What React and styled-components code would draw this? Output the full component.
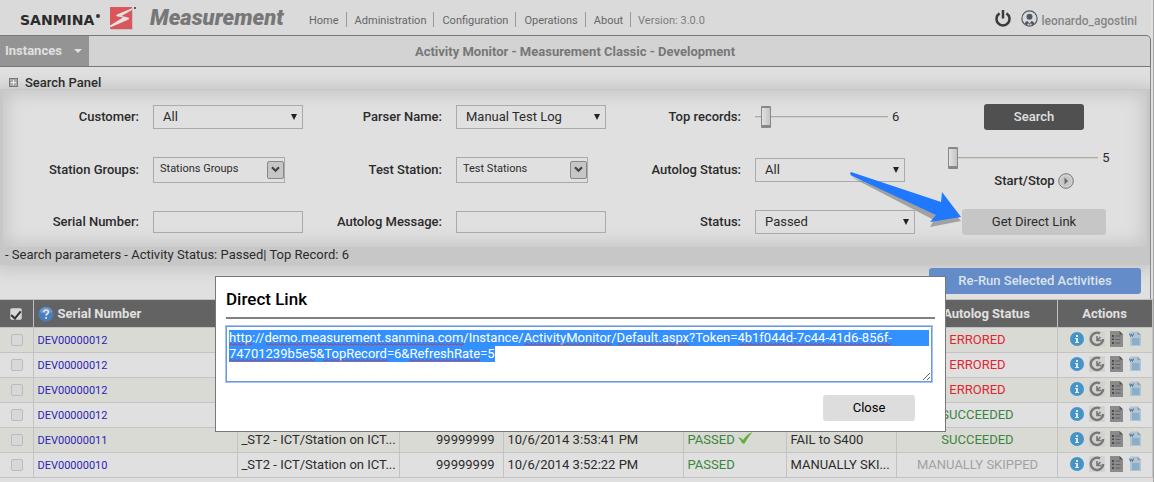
import React, { useEffect, useRef } from "react";
import styled, { createGlobalStyle } from "styled-components";

const TOKEN_URL =
  "http://demo.measurement.sanmina.com/Instance/ActivityMonitor/Default.aspx?Token=4b1f044d-7c44-41d6-856f-74701239b5e5&TopRecord=6&RefreshRate=5";

const MENU = ["Home", "Administration", "Configuration", "Operations", "About"];

const ROWS = [
  { serial: "DEV00000012", autolog: "ERRORED" },
  { serial: "DEV00000012", autolog: "ERRORED" },
  { serial: "DEV00000012", autolog: "ERRORED" },
  { serial: "DEV00000012", autolog: "SUCCEEDED" },
  {
    serial: "DEV00000011",
    station: "_ST2 - ICT/Station on ICT...",
    part: "99999999",
    date: "10/6/2014 3:53:41 PM",
    status: "PASSED",
    checked: true,
    message: "FAIL to S400",
    autolog: "SUCCEEDED",
  },
  {
    serial: "DEV00000010",
    station: "_ST2 - ICT/Station on ICT...",
    part: "99999999",
    date: "10/6/2014 3:52:22 PM",
    status: "PASSED",
    message: "MANUALLY SKI...",
    autolog: "MANUALLY SKIPPED",
  },
];

const AUTOLOG_COLORS = {
  ERRORED: "#df2732",
  SUCCEEDED: "#3a8540",
  "MANUALLY SKIPPED": "#a2a2a2",
};

// start and width of every misspelled word, per line of the link
const MISSPELLED = [
  { line: 0, x: 0, w: 23 },
  { line: 0, x: 37, w: 198 },
  { line: 0, x: 295, w: 88 },
  { line: 0, x: 389, w: 71 },
  { line: 0, x: 510, w: 152 },
  { line: 1, x: 0, w: 86 },
  { line: 1, x: 94, w: 65 },
  { line: 1, x: 180, w: 71 },
];

const SanminaMark = () => (
  <svg width="28" height="26" viewBox="0 0 28 26" aria-hidden="true">
    <rect x="1" y="2" width="22" height="22" fill="#c4c2c2" />
    <rect x="0" y="1" width="22" height="22" fill="#d9565b" />
    <path d="M22 2.200L7 8.500Q5 10 8 10.500L13 11.500 0 19.500V21.500L17.500 14Q21 12.300 17 11.300L11.500 10 22 4z" fill="#e4e1e1" />
    <circle cx="25" cy="2" r="1" fill="#333" />
  </svg>
);

const PowerIcon = () => (
  <svg width="16" height="17" viewBox="0 0 16 17" fill="none" stroke="#3a3a3a" strokeWidth="2.500" aria-hidden="true">
    <path d="M4.600 3.400a6.500 6.500 0 1 0 6.800 0" />
    <path d="M8 0v8.500" />
  </svg>
);

const UserIcon = () => (
  <svg width="17" height="17" viewBox="0 0 17 17" aria-hidden="true">
    <circle cx="8.500" cy="8.500" r="7.600" fill="none" stroke="#505866" strokeWidth="1.200" />
    <circle cx="8.500" cy="6.800" r="3" fill="#505866" />
    <path d="M3.500 13.500q1-2.500 3-2.500l2 2.500 2-2.500q2 0 3 2.500l-2.500 2-1-2.500-1.500 2-1.500-2-1 2.500z" fill="#505866" />
  </svg>
);

const HelpIcon = () => (
  <svg width="16" height="16" viewBox="0 0 16 16" aria-hidden="true">
    <circle cx="8" cy="8" r="7.500" fill="#4a7dbd" />
    <path d="M1.500 6a6.800 6.800 0 0 1 13 0q-6 3-13 0z" fill="#6b97cc" />
    <path d="M5.700 6.300q.1-2.300 2.400-2.300 2.300 0 2.300 2 0 1.200-1.300 2-1 .6-1 1.700" fill="none" stroke="#e3e6ea" strokeWidth="1.600" />
    <rect x="7.200" y="11" width="1.800" height="1.700" fill="#e3e6ea" />
  </svg>
);

const InfoIcon = () => (
  <svg width="14" height="14" viewBox="0 0 14 14" aria-hidden="true">
    <circle cx="7" cy="7" r="7" fill="#4594c9" />
    <path d="M6 3h2v2H6zM5 6h3v4h1v1H5v-1h1V7H5z" fill="#e2e8ec" />
  </svg>
);

const RerunIcon = () => (
  <svg width="16" height="16" viewBox="0 0 16 16" aria-hidden="true">
    <rect width="16" height="16" fill="#d2d2d0" />
    <path d="M11 2.400A6.200 6.200 0 1 0 14.200 8" fill="none" stroke="#777" strokeWidth="2.400" />
    <path d="M8 5v4.500h4.500M8 9.500L11.500 6" fill="none" stroke="#777" strokeWidth="1.600" />
  </svg>
);

const LogIcon = () => (
  <svg width="14" height="16" viewBox="0 0 14 16" aria-hidden="true">
    <path d="M0 0h9.500L13 3.500V16H0z" fill="#8b8b8b" />
    <path d="M9.500 0v3.500H13z" fill="#555" />
    <path d="M2 4h2v2H2zM2 7.500h2v1.500H2zM2 11h2v2H2z" fill="#4b4b4b" />
    <path d="M5.500 5h5M5.500 8.500h5M5.500 12h5" stroke="#636363" />
  </svg>
);

const WordIcon = () => (
  <svg width="13" height="16" viewBox="0 0 13 16" aria-hidden="true">
    <path d="M1 .5h7.500l3.500 3.500v11H1z" fill="#b4c3cd" />
    <path d="M8.500 .5v3.500H12z" fill="#8aa2b2" />
    <path d="M3 7h7.500v7H3z" fill="#87aecb" />
    <path d="M.5 2.500l1 3 1-2.500 1 2.500 1-3" fill="none" stroke="#3c79a8" />
  </svg>
);

const CheckMark = () => (
  <svg width="15" height="12" viewBox="0 0 15 12" aria-hidden="true">
    <path d="M0 5.500q2-.5 3.500 1L5 8Q9 2 14.500 0 10 5 6.500 11.500q-1.500.5-2.500-.5Q2.500 7.500 0 5.500z" fill="#62b03c" />
  </svg>
);

const PlayIcon = () => (
  <svg width="16" height="16" viewBox="0 0 16 16" aria-hidden="true">
    <circle cx="8" cy="8" r="7.300" fill="#d2d2d2" stroke="#777" />
    <circle cx="8" cy="8" r="5.300" fill="#c6c6c6" />
    <path d="M6.500 4.500L10 8l-3.500 3.500z" fill="#666" />
  </svg>
);

const Field = ({ id, label, children }) => (
  <>
    <FieldLabel htmlFor={id}>{label}</FieldLabel>
    <FieldBody>{children}</FieldBody>
  </>
);

const SelectField = ({ id, label, value, wide }) => (
  <Field id={id} label={label}>
    <SelectWrap $wide={wide}>
      <Select id={id} defaultValue={value}>
        <option>{value}</option>
      </Select>
    </SelectWrap>
  </Field>
);

const StationField = ({ id, label, value }) => (
  <Field id={id} label={label}>
    <StationPicker>
      <StationSelect id={id} defaultValue={value}>
        <option>{value}</option>
      </StationSelect>
      <StationArrow aria-hidden="true">
        <svg width="9" height="7" viewBox="0 0 9 7">
          <path d="M1 1.200l3.500 3.500L8 1.200" fill="none" stroke="#444" strokeWidth="2.200" />
        </svg>
      </StationArrow>
    </StationPicker>
  </Field>
);

const DirectLinkDialog = () => {
  const linkRef = useRef(null);

  useEffect(() => {
    linkRef.current.focus();
    linkRef.current.select();
  }, []);

  return (
    <Dialog role="dialog" aria-labelledby="direct-link-title">
      <DialogTitle id="direct-link-title">Direct Link</DialogTitle>
      <LinkBox>
        <LinkText ref={linkRef} aria-label="Direct link" spellCheck={false} defaultValue={TOKEN_URL} />
        <Squiggles aria-hidden="true">
          <defs>
            <pattern id="wave" width="4" height="3" patternUnits="userSpaceOnUse">
              <path d="M0 2.500L2 .5l2 2" fill="none" stroke="#e0212f" />
            </pattern>
          </defs>
          {MISSPELLED.map((word) => (
            <g key={`${word.line}-${word.x}`} transform={`translate(0 ${word.line * 16})`}>
              <rect x={word.x} y="12" width={word.w} height="3" fill="url(#wave)" />
            </g>
          ))}
        </Squiggles>
      </LinkBox>
      <DialogFooter>
        <Button $tone="light">Close</Button>
      </DialogFooter>
    </Dialog>
  );
};

const App = () => (
  <Page>
    <GlobalStyle />
    <Header>
      <Brand>
        SANMINA
        <BrandDot />
      </Brand>
      <SanminaMark />
      <Product>Measurement</Product>
      <Menu>
        {MENU.map((item) => (
          <MenuLink key={item} href="#">
            {item}
          </MenuLink>
        ))}
        <Version>Version: 3.0.0</Version>
      </Menu>
      <Account>
        <IconButton aria-label="Log out">
          <PowerIcon />
        </IconButton>
        <UserLink href="#">
          <UserIcon />
          leonardo_agostini
        </UserLink>
      </Account>
    </Header>

    <TitleBar>
      <InstancesButton>
        Instances
        <Caret />
      </InstancesButton>
      <PageTitle>Activity Monitor - Measurement Classic - Development</PageTitle>
    </TitleBar>

    <Content>
      <PanelHeading>
        <svg width="9" height="10" viewBox="0 0 9 10" aria-hidden="true">
          <rect x=".5" y=".5" width="8" height="8" fill="#aaa" stroke="#777" />
          <path d="M4.500 2v5M2 4.500h5" stroke="#eee" />
        </svg>
        Search Panel
      </PanelHeading>

      <PanelShadow>
        <Panel>
          <SelectField id="customer" label="Customer:" value="All" />
          <SelectField id="parser" label="Parser Name:" value="Manual Test Log" />
          <Field id="top" label="Top records:">
            <Slider id="top" type="range" min="0" max="120" defaultValue="6" $width={133} />
            <output>6</output>
          </Field>
          <Actions>
            <Button $tone="dark">Search</Button>
          </Actions>

          <StationField id="groups" label="Station Groups:" value="Stations Groups" />
          <StationField id="station" label="Test Station:" value="Test Stations" />
          <SelectField id="autolog" label="Autolog Status:" value="All" />
          <Refresh>
            <RefreshRow>
              <Slider aria-label="Refresh rate" type="range" min="5" max="60" defaultValue="5" $width={150} />
              <output>5</output>
            </RefreshRow>
            <StartStop>
              Start/Stop <PlayIcon />
            </StartStop>
          </Refresh>

          <Field id="serial" label="Serial Number:">
            <TextInput id="serial" type="text" />
          </Field>
          <Field id="message" label="Autolog Message:">
            <TextInput id="message" type="text" />
          </Field>
          <SelectField id="status" label="Status:" value="Passed" wide />
          <Actions>
            <Button $tone="gray">Get Direct Link</Button>
            <Arrow width="116" height="58" viewBox="0 0 116 58" aria-hidden="true">
              <path d="M3 4L93 37 94 26 113 48 82 54 86 47z" transform="translate(0 2)" fill="#777" opacity=".6" />
              <path d="M3 1L93 31 94 21 113 46 82 51 88 44 4 5q-3-2-1-4z" fill="#1f78fe" />
            </Arrow>
          </Actions>
        </Panel>
        <Parameters>- Search parameters - Activity Status: Passed| Top Record: 6</Parameters>
      </PanelShadow>

      <TableTools>
        <Button $tone="blue">Re-Run Selected Activities</Button>
      </TableTools>
    </Content>

    <Table>
      <colgroup>
        {[33, 204, 162, 104, 180, 103, 110, 161, 95].map((width, i) => (
          <Col key={i} $width={width} />
        ))}
      </colgroup>
      <thead>
        <tr>
          <Th>
            <Check type="checkbox" aria-label="Select all" defaultChecked />
          </Th>
          <Th $left>
            <HeadLabel>
              <HelpIcon />
              Serial Number
            </HeadLabel>
          </Th>
          <Th />
          <Th />
          <Th />
          <Th />
          <Th />
          <Th>
            <HeadLabel>
              <HelpIcon />
              Autolog Status
            </HeadLabel>
          </Th>
          <Th>Actions</Th>
        </tr>
      </thead>
      <tbody>
        {ROWS.map((row, i) => (
          <Row key={i}>
            <Td $align="center">
              <Check type="checkbox" aria-label={`Select row ${i + 1}`} />
            </Td>
            <Td>
              <SerialLink href="#">{row.serial}</SerialLink>
            </Td>
            <Td>{row.station}</Td>
            <Td $align="right">{row.part}</Td>
            <Td>{row.date}</Td>
            <Td $color="#3a8540">
              {row.status} {row.checked && <CheckMark />}
            </Td>
            <Td>{row.message}</Td>
            <Td $align="center" $color={AUTOLOG_COLORS[row.autolog]}>
              {row.autolog}
            </Td>
            <Td>
              <RowActions>
                <IconButton aria-label="Info">
                  <InfoIcon />
                </IconButton>
                <IconButton aria-label="Re-run">
                  <RerunIcon />
                </IconButton>
                <IconButton aria-label="Log">
                  <LogIcon />
                </IconButton>
                <IconButton aria-label="Document">
                  <WordIcon />
                </IconButton>
              </RowActions>
            </Td>
          </Row>
        ))}
      </tbody>
    </Table>

    <DirectLinkDialog />
  </Page>
);

export default App;

const GlobalStyle = createGlobalStyle`
  * {
    box-sizing: border-box;
  }
  body {
    margin: 0;
    background: #e0e0e0;
    color: #2b2b2b;
    font: 13px/16px Roboto, "Liberation Sans", sans-serif;
  }
  button, input, select, textarea {
    font: inherit;
    color: inherit;
  }
`;

const Page = styled.div`
  position: relative;
  min-height: 100vh;
  padding-right: 2px;
  border-right: 1px solid #a5a5a5;
`;

const Header = styled.header`
  display: flex;
  height: 35px;
  padding: 6px 14px 0 20px;
  background: #dadada;
`;

const Brand = styled.div`
  display: flex;
  width: 90px;
  padding-top: 6px;
  font: bold 14px/16px "DejaVu Sans", sans-serif;
`;

const BrandDot = styled.span`
  width: 4px;
  height: 4px;
  margin: 2px 0 0 2px;
  border-radius: 50%;
  background: #333;
`;

const Product = styled.div`
  width: 151px;
  margin-left: 12px;
  color: #777;
  font: italic 900 22px/24px Roboto, sans-serif;
`;

const Menu = styled.nav`
  display: flex;
  align-items: flex-start;
  padding-top: 6px;
`;

const MenuLink = styled.a`
  height: 15px;
  padding: 1px 7px 0 8px;
  border-right: 1px solid #999;
  color: #666;
  font-size: 11px;
  text-decoration: none;
`;

const Version = styled.span`
  padding: 1px 7px 0;
  color: #7d7d7d;
  font-size: 11px;
`;

const Account = styled.div`
  display: flex;
  align-items: flex-start;
  gap: 10px;
  margin-left: auto;
  padding-top: 4px;
`;

const IconButton = styled.button`
  display: flex;
  padding: 0;
  border: 0;
  background: none;
`;

const UserLink = styled.a`
  display: flex;
  align-items: flex-end;
  gap: 3px;
  color: #858585;
  font-size: 12px;
  font-weight: 500;
  line-height: 12px;
  text-decoration: none;
`;

const TitleBar = styled.div`
  display: flex;
  height: 32px;
  border: solid #777;
  border-width: 1px 1px 1px 0;
  border-radius: 0 5px 0 0;
  background: #d3d3d3;
`;

const InstancesButton = styled.button`
  display: flex;
  align-items: center;
  justify-content: space-between;
  width: 89px;
  padding: 0 7px 0 5px;
  border: 0;
  background: #949494;
  color: #e0e0e0;
  font-weight: bold;
`;

const Caret = styled.span`
  border: 4px solid transparent;
  border-top-color: #e0e0e0;
  border-bottom: 0;
`;

const PageTitle = styled.h1`
  flex: 1;
  margin: 0;
  padding-right: 89px;
  color: #777;
  font-size: 13px;
  line-height: 32px;
  text-align: center;
`;

const Content = styled.main`
  border-right: 1px solid #888;
`;

const PanelHeading = styled.h2`
  position: relative;
  z-index: 1;
  display: flex;
  align-items: center;
  gap: 7px;
  margin: 0 0 -2px;
  padding: 8px 9px 0;
  font-size: 13px;
  font-weight: 500;
`;

const PanelShadow = styled.section`
  background: #c7c7c7;
  box-shadow: 0 1px 14px 5px #c7c7c7;
  clip-path: inset(-20px 0);
`;

const Panel = styled.div`
  display: grid;
  grid-template-columns: 130px 163px 140px 160px 139px 186px 1fr;
  grid-template-rows: 53px 53px 51px;
  align-items: center;
  padding: 0 6px;
  border: solid #c7c7c7;
  border-width: 1px 3px 0;
  background: #e0e0e0;
  box-shadow: inset 0 0 16px 5px #c7c7c7;
`;

const FieldLabel = styled.label`
  font-weight: 500;
  text-align: right;
`;

const FieldBody = styled.div`
  display: flex;
  align-items: center;
  gap: 4px;
  padding-left: 14px;
`;

const SelectWrap = styled.div`
  position: relative;
  flex: none;
  width: ${({ $wide }) => ($wide ? "160px" : "150px")};
  &::after {
    content: "";
    position: absolute;
    top: 9px;
    right: 6px;
    border: solid transparent;
    border-width: 6px 3px 0;
    border-top-color: #222;
    pointer-events: none;
  }
`;

const Select = styled.select`
  appearance: none;
  width: 100%;
  height: 24px;
  padding: 0 9px;
  border: 1px solid #aaa;
  border-radius: 0;
  background: transparent;
`;

const StationPicker = styled.div`
  display: flex;
  align-items: center;
  width: 132px;
  height: 26px;
  border: 1px solid #aaa;
`;

const StationSelect = styled.select`
  appearance: none;
  flex: 1;
  height: 22px;
  padding: 0 6px 2px;
  border: 0;
  background: transparent;
  font-size: 11px;
`;

const StationArrow = styled.span`
  display: flex;
  align-items: center;
  justify-content: center;
  width: 17px;
  height: 18px;
  border: 1px solid #888;
  border-radius: 2px;
  background: #c6c6c6;
`;

const TextInput = styled.input`
  flex: none;
  width: 150px;
  height: 22px;
  padding: 0 8px;
  border: 1px solid #aaa;
  background: transparent;
`;

const Slider = styled.input`
  appearance: none;
  width: ${({ $width }) => $width}px;
  height: 22px;
  margin: 0;
  background: linear-gradient(#aaa, #aaa) 0 10px / 100% 1px no-repeat,
    linear-gradient(#d4d2c4, #d4d2c4) 0 11px / 100% 1px no-repeat;
  &::-webkit-slider-thumb {
    appearance: none;
    width: 10px;
    height: 22px;
    border: 1px solid #888;
    border-width: 2px 1px 3px;
    border-radius: 1px;
    background: linear-gradient(90deg, #e2e2e2, #c4c4c4);
  }
`;

const Actions = styled.div`
  position: relative;
  display: flex;
  justify-content: center;
`;

const Refresh = styled.div`
  display: flex;
  flex-direction: column;
  align-items: center;
  gap: 4px;
  padding-bottom: 4px;
`;

const RefreshRow = styled.div`
  display: flex;
  align-items: center;
  gap: 4px;
  padding-right: 10px;
`;

const StartStop = styled.div`
  display: flex;
  align-items: center;
  gap: 3px;
  font-weight: 500;
`;

const Arrow = styled.svg`
  position: absolute;
  top: -38px;
  left: -79px;
`;

const TONES = {
  dark: "width: 100px; background: #505050; color: #e0e0e0; font-weight: 500;",
  gray: "width: 144px; background: #c6c6c6;",
  blue: "width: 212px; background: #648cc8; color: #dce3ec; font-weight: 500;",
  light: "width: 92px; background: #ddd; color: #000;",
};

const Button = styled.button`
  height: 26px;
  padding: 0;
  border: 0;
  border-radius: 3px;
  ${({ $tone }) => TONES[$tone]}
`;

const Parameters = styled.p`
  margin: 0;
  padding: 0 5px 2px;
`;

const TableTools = styled.div`
  position: relative;
  display: flex;
  justify-content: flex-end;
  padding: 3px 9px 5px;
`;

const Table = styled.table`
  width: 100%;
  table-layout: fixed;
  border-collapse: collapse;
`;

const Col = styled.col`
  width: ${({ $width }) => $width}px;
`;

const Th = styled.th`
  height: 28px;
  padding: 0 4px;
  border: 1px solid #c0c0c0;
  border-left-width: 0;
  background: #636363;
  color: #e0e0e0;
  text-align: ${({ $left }) => ($left ? "left" : "center")};
`;

const HeadLabel = styled.span`
  display: inline-flex;
  align-items: center;
  gap: 4px;
  vertical-align: middle;
`;

const Row = styled.tr`
  &:nth-child(odd) {
    background: #dadad5;
  }
`;

const Td = styled.td`
  height: 25px;
  padding: 0 2px 0 4px;
  border: 1px solid #c3c3c3;
  border-left-width: 0;
  color: ${({ $color }) => $color || "#2b2b2b"};
  text-align: ${({ $align }) => $align || "left"};
  white-space: nowrap;
  ${({ $align }) => $align === "right" && "padding-right: 8px;"}
`;

const SerialLink = styled.a`
  color: #2d1fb4;
  font-size: 11px;
  text-decoration: none;
`;

const Check = styled.input`
  appearance: none;
  display: block;
  width: 12px;
  height: 12px;
  margin: 0 auto;
  border: 1px solid #bbb;
  border-radius: 2px;
  background: #d8d8d8;
  &:checked::after {
    content: "";
    display: block;
    width: 4px;
    height: 8px;
    margin: 0 auto;
    border: solid #333;
    border-width: 0 2px 2px 0;
    transform: rotate(40deg);
  }
`;

const RowActions = styled.div`
  display: flex;
  align-items: center;
  justify-content: center;
  gap: 5px;
  padding-bottom: 3px;
`;

const Dialog = styled.div`
  position: absolute;
  top: 276px;
  left: 215px;
  width: 731px;
  padding: 12px 10px 10px;
  border: 1px solid #777;
  background: #fff;
`;

const DialogTitle = styled.h2`
  margin: 0 0 7px;
  padding-bottom: 8px;
  border-bottom: 2px solid #808080;
  color: #000;
  font-size: 17px;
  font-weight: 500;
  line-height: 20px;
`;

const LinkBox = styled.div`
  position: relative;
`;

const LinkText = styled.textarea`
  display: block;
  width: 706px;
  height: 56px;
  padding: 3px 2px 2px;
  border: 1px solid #6d97dd;
  outline: 1px solid #a5c3f3;
  color: #000;
  &:focus {
    background: linear-gradient(#3390ff, #3390ff) 0 0 / 100% 16px no-repeat content-box #fff;
  }
  &::selection {
    background: #3390ff;
    color: #fff;
  }
`;

const Squiggles = styled.svg`
  position: absolute;
  top: 5px;
  left: 3px;
  width: 700px;
  height: 36px;
  pointer-events: none;
`;

const DialogFooter = styled.div`
  display: flex;
  justify-content: flex-end;
  padding: 13px 20px 0;
`;
